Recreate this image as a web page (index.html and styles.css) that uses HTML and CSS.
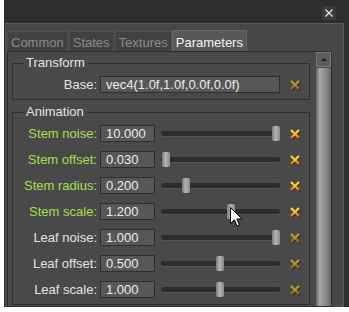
FILE: index.html
```html
<!DOCTYPE html>
<html lang="en">
<head>
    <meta charset="UTF-8">
    <title>Parameters</title>
    <link rel="stylesheet" href="styles.css">
</head>
<body>
    <svg class="defs" width="0" height="0">
        <defs>
            <linearGradient id="x-on" x1="0" y1="0" x2="0" y2="1">
                <stop offset="0" stop-color="#ffe63c"/>
                <stop offset="0.5" stop-color="#ffc21c"/>
                <stop offset="1" stop-color="#ee6c0e"/>
            </linearGradient>
            <linearGradient id="x-off" x1="0" y1="0" x2="0" y2="1">
                <stop offset="0" stop-color="#c4ac2c"/>
                <stop offset="0.5" stop-color="#b39024"/>
                <stop offset="1" stop-color="#9a5c1a"/>
            </linearGradient>
        </defs>
    </svg>

    <div class="window">
        <div class="titlebar">
            <div class="close">
                <svg width="14" height="14" viewBox="0 0 14 14"><path d="M3.5 3.5 L10.5 10.5 M10.5 3.5 L3.5 10.5" stroke="#e2e2e2" stroke-width="1.4"/></svg>
            </div>
        </div>

        <div class="panel">
            <div class="tabs">
                <div class="tab">Common</div>
                <div class="tab">States</div>
                <div class="tab">Textures</div>
                <div class="tab active">Parameters</div>
            </div>

            <div class="frame">
                <div class="content">
                    <fieldset class="group">
                        <legend>Transform</legend>
                        <div class="row">
                            <span class="name">Base:</span>
                            <div class="field wide">vec4(1.0f,1.0f,0.0f,0.0f)</div>
                            <svg class="reset" viewBox="0 0 11 11"><path d="M2 2 L10 10 M10 2 L2 10" stroke="#1e1e1e" stroke-opacity="0.6" stroke-width="2.4"/><path d="M1 1 L9 9 M9 1 L1 9" stroke="url(#x-off)" stroke-width="2.2"/></svg>
                        </div>
                    </fieldset>

                    <fieldset class="group animation">
                        <legend>Animation</legend>
                        <div class="row">
                            <span class="name mod">Stem noise:</span>
                            <div class="field">10.000</div>
                            <div class="slider"><div class="knob" style="--v: 1"></div></div>
                            <svg class="reset" viewBox="0 0 11 11"><path d="M2 2 L10 10 M10 2 L2 10" stroke="#1e1e1e" stroke-opacity="0.6" stroke-width="2.4"/><path d="M1 1 L9 9 M9 1 L1 9" stroke="url(#x-on)" stroke-width="2.2"/></svg>
                        </div>
                        <div class="row">
                            <span class="name mod">Stem offset:</span>
                            <div class="field">0.030</div>
                            <div class="slider"><div class="knob" style="--v: 0.01"></div></div>
                            <svg class="reset" viewBox="0 0 11 11"><path d="M2 2 L10 10 M10 2 L2 10" stroke="#1e1e1e" stroke-opacity="0.6" stroke-width="2.4"/><path d="M1 1 L9 9 M9 1 L1 9" stroke="url(#x-on)" stroke-width="2.2"/></svg>
                        </div>
                        <div class="row">
                            <span class="name mod">Stem radius:</span>
                            <div class="field">0.200</div>
                            <div class="slider"><div class="knob" style="--v: 0.19"></div></div>
                            <svg class="reset" viewBox="0 0 11 11"><path d="M2 2 L10 10 M10 2 L2 10" stroke="#1e1e1e" stroke-opacity="0.6" stroke-width="2.4"/><path d="M1 1 L9 9 M9 1 L1 9" stroke="url(#x-on)" stroke-width="2.2"/></svg>
                        </div>
                        <div class="row">
                            <span class="name mod">Stem scale:</span>
                            <div class="field">1.200</div>
                            <div class="slider"><div class="knob" style="--v: 0.595"></div></div>
                            <svg class="reset" viewBox="0 0 11 11"><path d="M2 2 L10 10 M10 2 L2 10" stroke="#1e1e1e" stroke-opacity="0.6" stroke-width="2.4"/><path d="M1 1 L9 9 M9 1 L1 9" stroke="url(#x-on)" stroke-width="2.2"/></svg>
                        </div>
                        <div class="row">
                            <span class="name">Leaf noise:</span>
                            <div class="field">1.000</div>
                            <div class="slider"><div class="knob" style="--v: 1"></div></div>
                            <svg class="reset" viewBox="0 0 11 11"><path d="M2 2 L10 10 M10 2 L2 10" stroke="#1e1e1e" stroke-opacity="0.6" stroke-width="2.4"/><path d="M1 1 L9 9 M9 1 L1 9" stroke="url(#x-off)" stroke-width="2.2"/></svg>
                        </div>
                        <div class="row">
                            <span class="name">Leaf offset:</span>
                            <div class="field">0.500</div>
                            <div class="slider"><div class="knob" style="--v: 0.495"></div></div>
                            <svg class="reset" viewBox="0 0 11 11"><path d="M2 2 L10 10 M10 2 L2 10" stroke="#1e1e1e" stroke-opacity="0.6" stroke-width="2.4"/><path d="M1 1 L9 9 M9 1 L1 9" stroke="url(#x-off)" stroke-width="2.2"/></svg>
                        </div>
                        <div class="row">
                            <span class="name">Leaf scale:</span>
                            <div class="field">1.000</div>
                            <div class="slider"><div class="knob" style="--v: 0.495"></div></div>
                            <svg class="reset" viewBox="0 0 11 11"><path d="M2 2 L10 10 M10 2 L2 10" stroke="#1e1e1e" stroke-opacity="0.6" stroke-width="2.4"/><path d="M1 1 L9 9 M9 1 L1 9" stroke="url(#x-off)" stroke-width="2.2"/></svg>
                        </div>
                    </fieldset>
                </div>

                <div class="scrollbar">
                    <div class="scroll-up"><span class="arrow"></span></div>
                    <div class="scroll-thumb"></div>
                </div>
            </div>
        </div>
    </div>

    <!-- mouse pointer sitting over the Stem scale slider -->
    <svg class="cursor" width="13" height="21" viewBox="0 0 13 21">
        <path d="M0.5 0.5 L0.5 16.5 L4.4 12.8 L7 19 L9.4 18 L6.9 12 L12 12 Z" fill="#fff" stroke="#000" stroke-width="1"/>
    </svg>
</body>
</html>
```

FILE: styles.css
```css
body {
    margin: 0;
    background-color: #fff;
    font-family: "Liberation Sans", Arial, sans-serif;
    font-size: 13px;
}
.defs {
    position: absolute;
}
.window {
    margin-left: 4px;
    height: 307px;
    background-color: #2d2d2d;
    display: flex;
    flex-direction: column;
    overflow: hidden;
}
.titlebar {
    height: 23px;
    box-sizing: border-box;
    padding: 6px 13px 0 0;
    display: flex;
    justify-content: flex-end;
    align-items: flex-start;
}
.close {
    width: 14px;
    height: 14px;
    background-color: #3b3b3b;
    border-radius: 2px;
}
.close svg {
    display: block;
}
.panel {
    flex: 1;
    margin: 0 5px 0 1px;
    background-color: #474747;
    border-top: 1px solid #5c5c5c;
    border-left: 1px solid #555;
    border-right: 1px solid #5c5c5c;
    padding: 6px 0 0 1px;
    display: flex;
    flex-direction: column;
}

/* tabs */
.tabs {
    display: flex;
    height: 21px;
    align-items: flex-end;
}
.tab {
    height: 20px;
    box-sizing: border-box;
    padding: 2px 3px 0 3px;
    line-height: 17px;
    margin-right: 1px;
    background-color: #414141;
    color: #8a8a8a;
    border: 1px solid #4f4f4f;
    border-bottom: none;
}
.tab.active {
    height: 21px;
    margin-left: -1px;
    padding-top: 3px;
    background-color: #595959;
    color: #f2f2f2;
    border-color: #676767;
}

/* tab page */
.frame {
    flex: 1;
    margin-right: 11px;
    border: 1px solid #2d2d2d;
    background-color: #494949;
    display: flex;
}
.content {
    flex: 1;
    padding: 3px 6px 0 4px;
}
.group {
    margin: 0;
    padding: 0 0 2px 0;
    border: 1px solid #2e2e2e;
    min-width: 0;
}
.group legend {
    margin-left: 10px;
    padding: 0 3px;
    line-height: 16px;
    color: #e4e4e4;
}
.animation {
    margin-top: 4px;
}
.row {
    display: flex;
    align-items: center;
    height: 26px;
}
.name {
    width: 84px;
    margin-right: 3px;
    text-align: right;
    color: #e4e4e4;
}
.name.mod {
    color: #a4e04a;
}
.field {
    width: 55px;
    height: 17px;
    box-sizing: border-box;
    padding-left: 5px;
    line-height: 15px;
    background-color: #575757;
    border: 1px solid #2e2e2e;
    color: #ececec;
    white-space: nowrap;
}
.field.wide {
    width: 180px;
}
.slider {
    position: relative;
    width: 119px;
    height: 15px;
    margin-left: 6px;
}
.slider::before {
    content: "";
    position: absolute;
    left: 0;
    right: 0;
    top: 5px;
    height: 5px;
    background-color: #2c2c2c;
    border-radius: 3px;
    box-shadow: 0 1px 0 #555;
}
.knob {
    position: absolute;
    top: 0;
    left: calc(var(--v) * 111px);
    width: 8px;
    height: 15px;
    border-radius: 2px;
    background: linear-gradient(to right, #7a7a7a, #b2b2b2 45%, #8a8a8a);
}
.reset {
    width: 11px;
    height: 11px;
    margin-left: 10px;
    margin-top: 2px;
}

/* scrollbar */
.scrollbar {
    width: 15px;
    display: flex;
    flex-direction: column;
}
.scroll-up {
    height: 15px;
    box-sizing: border-box;
    background-color: #5c5c5c;
    border: 1px solid #7a7a7a;
    display: flex;
    align-items: center;
    justify-content: center;
}
.arrow {
    width: 0;
    height: 0;
    border-left: 3px solid transparent;
    border-right: 3px solid transparent;
    border-bottom: 3px solid #1e1e1e;
}
.scroll-thumb {
    flex: 1;
    margin-top: 1px;
    border-radius: 2px 2px 0 0;
    background: linear-gradient(to right, #686868, #a6a6a6 25%, #8e8e8e 60%, #6a6a6a);
}

.cursor {
    position: absolute;
    left: 230px;
    top: 207px;
}
```
